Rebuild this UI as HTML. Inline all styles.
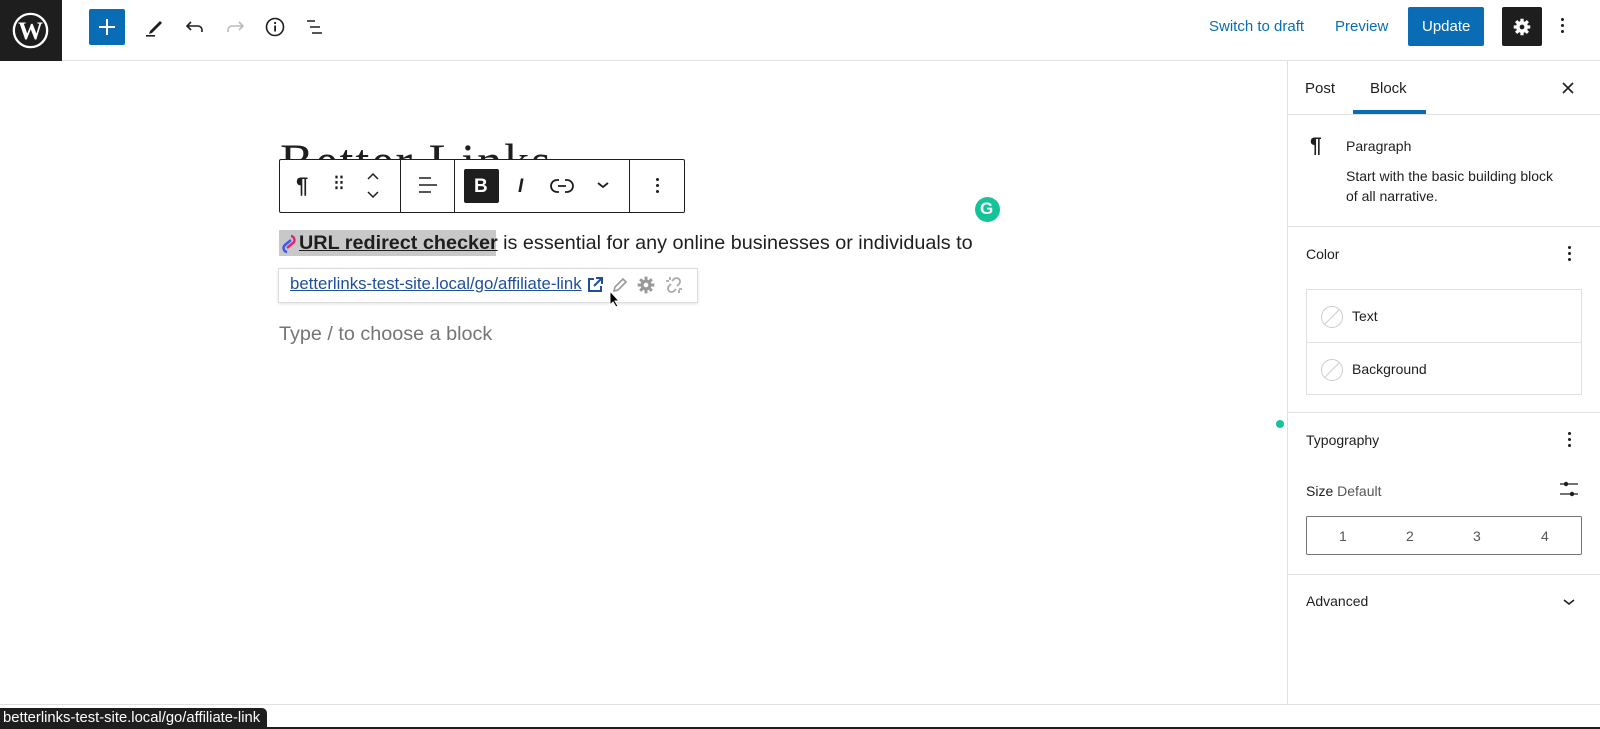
<!DOCTYPE html>
<html><head><meta charset="utf-8"><style>
*{margin:0;padding:0;box-sizing:border-box}
body{width:1600px;height:729px;overflow:hidden;background:#fff;font-family:"Liberation Sans",sans-serif;color:#1e1e1e;position:relative}
.a{position:absolute}
.t{position:absolute;white-space:nowrap}
</style></head><body>
<!-- top bar -->
<div class="a" style="left:0;top:0;width:1600px;height:61px;border-bottom:1px solid #e0e0e0"></div>
<div class="a" style="left:0;top:0;width:62px;height:61px;background:#1e1e1e"></div>
<svg class="a" style="left:12px;top:12px" width="37" height="37" viewBox="0 0 40 40"><circle cx="20" cy="20" r="18" fill="none" stroke="#fff" stroke-width="2.5"/><text x="20" y="29" font-family="Liberation Serif" font-size="27" font-weight="bold" fill="#fff" text-anchor="middle">W</text></svg>
<div class="a" style="left:89px;top:9px;width:36px;height:36px;background:#0a6cb5;border-radius:2px"></div>
<div class="a" style="left:99px;top:26px;width:16px;height:2px;background:#fff"></div>
<div class="a" style="left:106px;top:19px;width:2px;height:16px;background:#fff"></div>
<svg class="a" style="left:143px;top:15px" width="24" height="24" viewBox="0 0 24 24"><path d="M7 16 L17 6 l2 2 -10 10 -3 1z" fill="#1e1e1e"/><rect x="3" y="20" width="9" height="1.6" fill="#1e1e1e"/></svg>
<svg class="a" style="left:183px;top:15px" width="24" height="24" viewBox="0 0 24 24"><path d="M8 7 L4 11 8 15 M4 11 H15 a4 4 0 0 1 4 4 v2" fill="none" stroke="#1e1e1e" stroke-width="1.6"/></svg>
<svg class="a" style="left:223px;top:15px" width="24" height="24" viewBox="0 0 24 24"><path d="M16 7 L20 11 16 15 M20 11 H9 a4 4 0 0 0 -4 4 v2" fill="none" stroke="#bbb" stroke-width="1.6"/></svg>
<svg class="a" style="left:263px;top:15px" width="24" height="24" viewBox="0 0 24 24"><circle cx="12" cy="12" r="8.5" fill="none" stroke="#1e1e1e" stroke-width="1.6"/><rect x="11.2" y="10.5" width="1.8" height="6" fill="#1e1e1e"/><rect x="11.2" y="7" width="1.8" height="2" fill="#1e1e1e"/></svg>
<svg class="a" style="left:303px;top:15px" width="24" height="24" viewBox="0 0 24 24"><path d="M4 6h8M7 12h10M9 18h10" stroke="#1e1e1e" stroke-width="1.6"/></svg>
<div class="t" style="left:1209px;top:18px;font-size:15px;color:#0a6cb5">Switch to draft</div>
<div class="t" style="left:1335px;top:18px;font-size:15px;color:#0a6cb5">Preview</div>
<div class="a" style="left:1408px;top:7px;width:76px;height:39px;background:#0a6cb5;border-radius:2px"></div>
<div class="t" style="left:1422px;top:18px;font-size:15px;color:#fff">Update</div>
<div class="a" style="left:1502px;top:7px;width:40px;height:39px;background:#1e1e1e;border-radius:2px"></div>
<svg class="a" style="left:1511px;top:16px" width="22" height="22" viewBox="0 0 24 24"><g fill="#fff"><circle cx="12" cy="12" r="6.5"/><g stroke="#fff" stroke-width="3.5"><path d="M12 3v18M3 12h18M5.6 5.6l12.8 12.8M18.4 5.6L5.6 18.4"/></g></g><circle cx="12" cy="12" r="2.6" fill="#1e1e1e"/></svg>
<div class="a" style="left:1561px;top:18px;width:3px;height:3px;background:#1e1e1e;border-radius:50%;box-shadow:0 6px 0 #1e1e1e,0 12px 0 #1e1e1e"></div>

<!-- editor -->
<div class="t" style="left:280px;top:132px;font-family:'Liberation Serif',serif;font-size:50px;letter-spacing:2px;color:#1e1e1e">Better Links</div>
<div class="a" style="left:279px;top:159px;width:406px;height:54px;background:#fff;border:1px solid #1e1e1e;border-radius:2px"></div>
<div class="a" style="left:400px;top:160px;width:1px;height:52px;background:#1e1e1e"></div>
<div class="a" style="left:454px;top:160px;width:1px;height:52px;background:#1e1e1e"></div>
<div class="a" style="left:629px;top:160px;width:1px;height:52px;background:#1e1e1e"></div>
<div class="t" style="left:296px;top:173px;font-size:22px;font-weight:bold">¶</div>
<div class="t" style="left:333px;top:170px;font-size:22px;letter-spacing:-2px">⁝⁝</div>
<svg class="a" style="left:364px;top:170px" width="18" height="32" viewBox="0 0 18 32"><path d="M4 9l5-5 5 5M4 22l5 5 5-5" fill="none" stroke="#1e1e1e" stroke-width="1.5"/></svg>
<svg class="a" style="left:417px;top:174px" width="22" height="22" viewBox="0 0 22 22"><path d="M2 4h12M2 11h18M2 18h12" stroke="#1e1e1e" stroke-width="1.6"/></svg>
<div class="a" style="left:464px;top:169px;width:35px;height:34px;background:#1e1e1e;border-radius:2px"></div>
<div class="t" style="left:474px;top:176px;font-size:19px;font-weight:bold;color:#fff">B</div>
<div class="t" style="left:518px;top:176px;font-size:19px;font-style:italic;font-weight:bold">I</div>
<svg class="a" style="left:550px;top:175px" width="24" height="22" viewBox="0 0 24 22"><path d="M9 5H7a6 6 0 0 0 0 12h2M15 5h2a6 6 0 0 1 0 12h-2M8 11h8" fill="none" stroke="#1e1e1e" stroke-width="1.8"/></svg>
<svg class="a" style="left:596px;top:180px" width="14" height="10" viewBox="0 0 14 10"><path d="M2 3l5 4 5-4" fill="none" stroke="#1e1e1e" stroke-width="1.8"/></svg>
<div class="a" style="left:656px;top:178px;width:3px;height:3px;background:#1e1e1e;border-radius:50%;box-shadow:0 6px 0 #1e1e1e,0 12px 0 #1e1e1e"></div>

<div class="a" style="left:975px;top:197px;width:25px;height:25px;border-radius:50%;background:#15c39a"></div>
<div class="t" style="left:980px;top:199px;font-size:17px;font-weight:bold;color:#fff">G</div>

<div class="a" style="left:279px;top:230px;width:217px;height:26px;background:#c8c8c8"></div>
<svg class="a" style="left:280px;top:233px" width="18" height="22" viewBox="0 0 18 22"><path d="M11 3a4 4 0 0 1 2 7l-6 5" fill="none" stroke="#e4247a" stroke-width="2.5"/><path d="M7 19a4 4 0 0 1-2-7l6-5" fill="none" stroke="#3a5af0" stroke-width="2.5"/></svg>
<div class="t" style="left:299px;top:232px;font-size:19.8px"><span style="font-weight:bold;text-decoration:underline">URL redirect checker</span> is essential for any online businesses or individuals to</div>
<div class="a" style="left:278px;top:268px;width:420px;height:35px;background:#fff;border:1px solid #ddd;box-shadow:0 1px 3px rgba(0,0,0,.12)"></div>
<div class="t" style="left:290px;top:274px;font-size:16.8px;color:#1e4f9a;text-decoration:underline">betterlinks-test-site.local/go/affiliate-link</div>
<svg class="a" style="left:586px;top:276px" width="18" height="18" viewBox="0 0 18 18"><path d="M8 3H3v12h12v-5M10 2h6v6M16 2L8 10" fill="none" stroke="#1e4f9a" stroke-width="2"/></svg>
<svg class="a" style="left:611px;top:276px" width="18" height="18" viewBox="0 0 18 18"><path d="M3 15l1-4 8-8 3 3-8 8z" fill="none" stroke="#999" stroke-width="1.6"/></svg>
<svg class="a" style="left:636px;top:275px" width="20" height="20" viewBox="0 0 24 24"><g fill="#999"><circle cx="12" cy="12" r="6.5"/><g stroke="#999" stroke-width="3.5"><path d="M12 2v20M2 12h20M5 5l14 14M19 5L5 19"/></g></g><circle cx="12" cy="12" r="2.8" fill="#fff"/></svg>
<svg class="a" style="left:664px;top:275px" width="20" height="20" viewBox="0 0 20 20"><path d="M8 6l2-2a3 3 0 0 1 5 5l-2 2M12 14l-2 2a3 3 0 0 1-5-5l2-2M2 6h3M6 2v3M15 18v-3M18 14h-3" fill="none" stroke="#aaa" stroke-width="1.8"/></svg>
<svg class="a" style="left:609px;top:290px" width="12" height="18" viewBox="0 0 12 18"><path d="M1 1v14l3-3 3 5 2-1-3-5h4z" fill="#000" stroke="#fff" stroke-width="1"/></svg>
<div class="t" style="left:279px;top:323px;font-size:19.8px;color:#757575">Type / to choose a block</div>
<div class="a" style="left:1276px;top:420px;width:8px;height:8px;border-radius:50%;background:#15c39a"></div>

<!-- sidebar -->
<div class="a" style="left:1287px;top:61px;width:1px;height:643px;background:#e0e0e0"></div>
<div class="t" style="left:1305px;top:80px;font-size:15px">Post</div>
<div class="t" style="left:1370px;top:80px;font-size:15px">Block</div>
<div class="a" style="left:1353px;top:110px;width:73px;height:4px;background:#0a6cb5"></div>
<div class="a" style="left:1288px;top:114px;width:312px;height:1px;background:#e0e0e0"></div>
<svg class="a" style="left:1561px;top:81px" width="14" height="14" viewBox="0 0 14 14"><path d="M2 2l10 10M12 2L2 12" stroke="#1e1e1e" stroke-width="1.6"/></svg>
<div class="t" style="left:1310px;top:134px;font-size:21px;font-weight:bold">¶</div>
<div class="t" style="left:1346px;top:138px;font-size:14px">Paragraph</div>
<div class="t" style="left:1346px;top:166px;font-size:14px;line-height:20px">Start with the basic building block<br>of all narrative.</div>
<div class="a" style="left:1288px;top:226px;width:312px;height:1px;background:#e0e0e0"></div>
<div class="t" style="left:1306px;top:246px;font-size:14px">Color</div>
<div class="a" style="left:1568px;top:246px;width:3px;height:3px;background:#1e1e1e;border-radius:50%;box-shadow:0 6px 0 #1e1e1e,0 12px 0 #1e1e1e"></div>
<div class="a" style="left:1306px;top:289px;width:276px;height:106px;border:1px solid #e0e0e0"></div>
<div class="a" style="left:1306px;top:342px;width:276px;height:1px;background:#e0e0e0"></div>
<svg class="a" style="left:1320px;top:305px" width="24" height="24" viewBox="0 0 24 24"><circle cx="12" cy="12" r="10.5" fill="none" stroke="#ccc"/><path d="M5 19L19 5" stroke="#ccc"/></svg>
<svg class="a" style="left:1320px;top:358px" width="24" height="24" viewBox="0 0 24 24"><circle cx="12" cy="12" r="10.5" fill="none" stroke="#ccc"/><path d="M5 19L19 5" stroke="#ccc"/></svg>
<div class="t" style="left:1352px;top:308px;font-size:14px">Text</div>
<div class="t" style="left:1352px;top:361px;font-size:14px">Background</div>
<div class="a" style="left:1288px;top:412px;width:312px;height:1px;background:#e0e0e0"></div>
<div class="t" style="left:1306px;top:432px;font-size:14px">Typography</div>
<div class="a" style="left:1568px;top:432px;width:3px;height:3px;background:#1e1e1e;border-radius:50%;box-shadow:0 6px 0 #1e1e1e,0 12px 0 #1e1e1e"></div>
<div class="t" style="left:1306px;top:483px;font-size:14px">Size <span style="color:#555">Default</span></div>
<svg class="a" style="left:1559px;top:480px" width="20" height="18" viewBox="0 0 20 18"><path d="M1 4h18M1 14h18" stroke="#1e1e1e" stroke-width="1.3"/><circle cx="7" cy="4" r="2.2" fill="#1e1e1e"/><circle cx="13" cy="14" r="2.2" fill="#1e1e1e"/></svg>
<div class="a" style="left:1306px;top:516px;width:276px;height:39px;border:1px solid #757575;border-radius:2px"></div>
<div class="t" style="left:1339px;top:528px;font-size:14px;color:#555">1</div>
<div class="t" style="left:1406px;top:528px;font-size:14px;color:#555">2</div>
<div class="t" style="left:1473px;top:528px;font-size:14px;color:#555">3</div>
<div class="t" style="left:1541px;top:528px;font-size:14px;color:#555">4</div>
<div class="a" style="left:1288px;top:574px;width:312px;height:1px;background:#e0e0e0"></div>
<div class="t" style="left:1306px;top:593px;font-size:14px">Advanced</div>
<svg class="a" style="left:1562px;top:597px" width="14" height="10" viewBox="0 0 14 10"><path d="M2 3l5 4 5-4" fill="none" stroke="#1e1e1e" stroke-width="1.6"/></svg>

<!-- footer -->
<div class="a" style="left:0;top:704px;width:1600px;height:25px;background:#fff;border-top:1px solid #e0e0e0"></div>
<div class="a" style="left:0;top:708px;width:267px;height:21px;background:#1e1e1e;border-top-right-radius:5px"></div>
<div class="t" style="left:3px;top:710px;font-size:14.8px;color:#fff">betterlinks-test-site.local/go/affiliate-link</div>
<div class="a" style="left:267px;top:727px;width:1333px;height:2px;background:#1e1e1e"></div>
</body></html>
